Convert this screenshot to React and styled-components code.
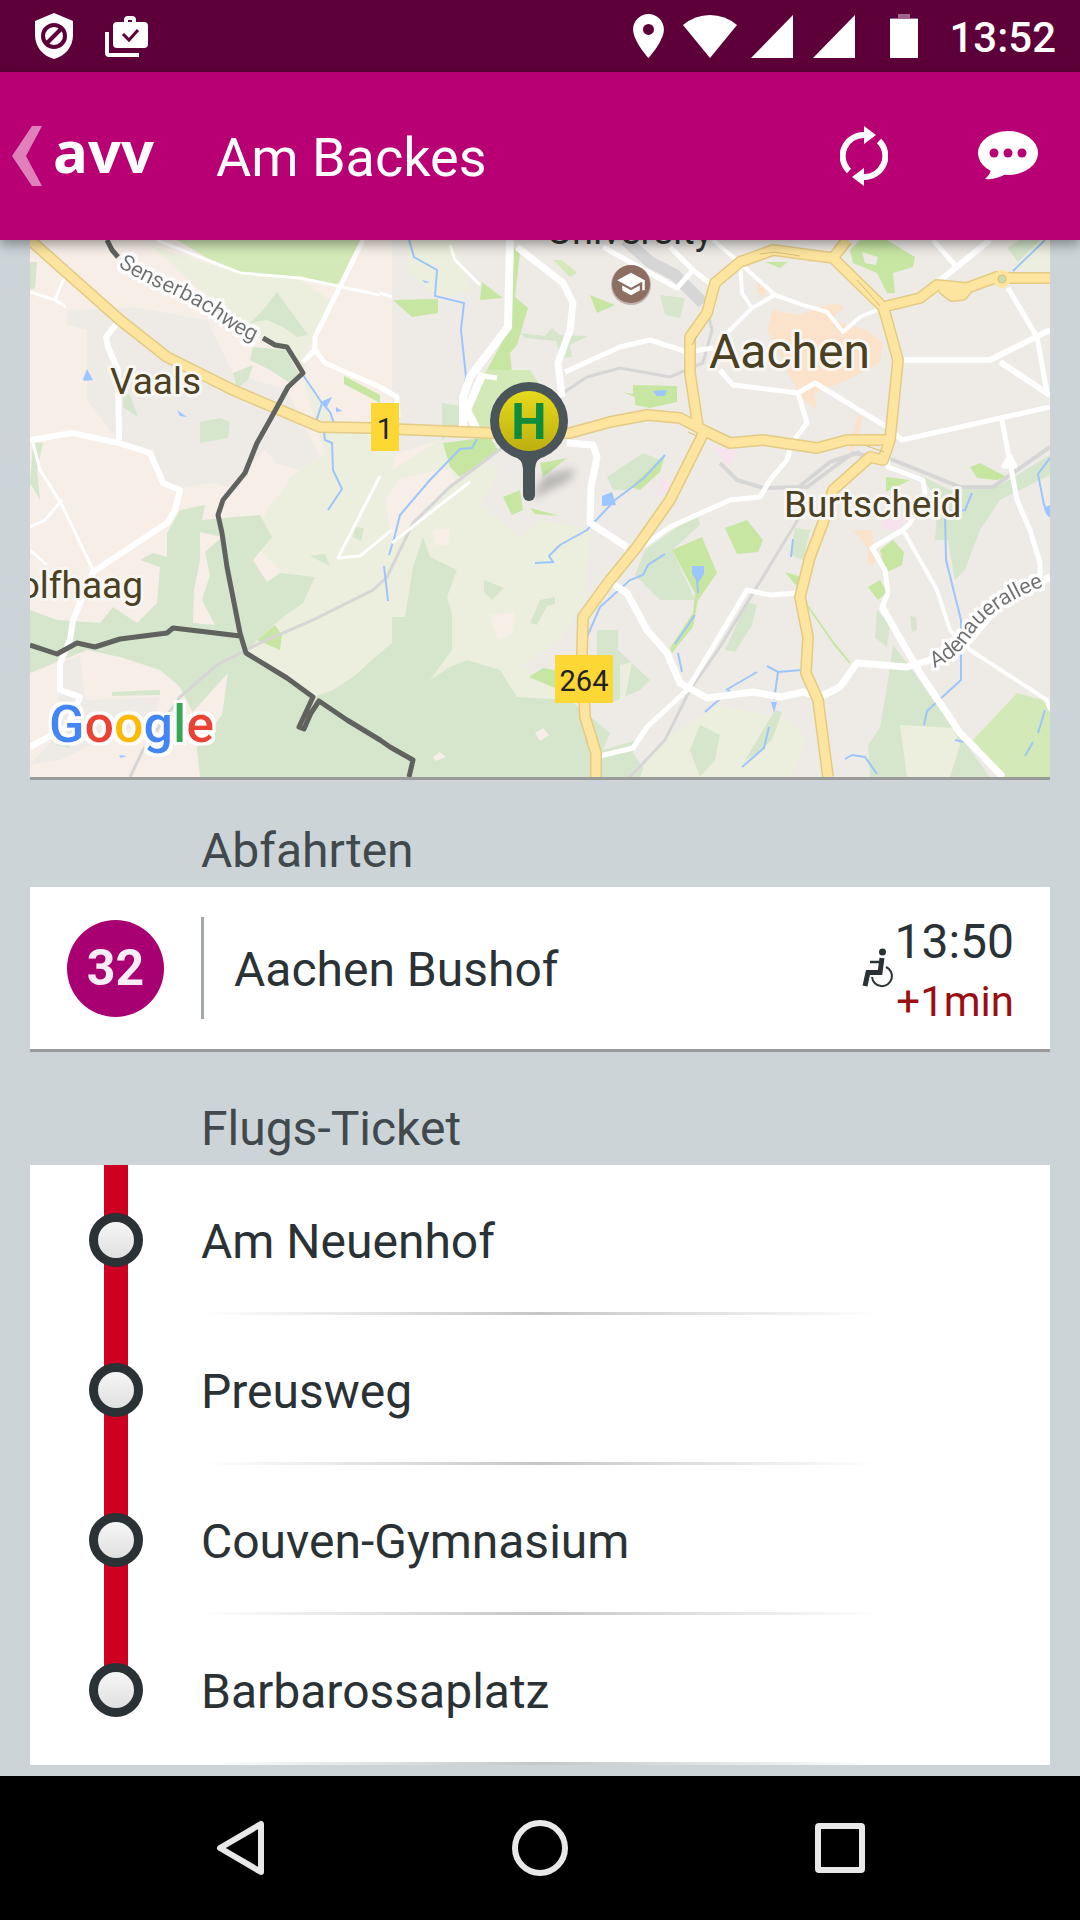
import React from 'react';
import styled, { createGlobalStyle } from 'styled-components';

const GlobalStyle = createGlobalStyle`
  * {
    box-sizing: border-box;
  }
  body {
    margin: 0;
    background: #ccd4d8;
    font-family: Roboto, 'Noto Sans', sans-serif;
  }
  h1, h2, p, ul {
    margin: 0;
    padding: 0;
    font-weight: 400;
  }
  button {
    border: 0;
    padding: 0;
    background: none;
    color: inherit;
    font: inherit;
  }
  svg {
    display: block;
  }
`;

const Screen = styled.div`
  display: flex;
  flex-direction: column;
  min-height: 100vh;
  background: #ccd4d8;
  color: #2a3235;
`;

const StatusBar = styled.div`
  display: flex;
  align-items: center;
  justify-content: space-between;
  height: 72px;
  padding: 0 24px 0 35px;
  background: #5d0039;
  color: #fff;
`;

const Notifications = styled.div`
  display: flex;
  align-items: center;
  gap: 32px;
`;

const Indicators = styled.div`
  display: flex;
  align-items: center;
`;

const Indicator = styled.span`
  display: flex;
  justify-content: center;
  width: ${props => (props.$wide ? 78 : 62)}px;
`;

const Clock = styled.time`
  padding: 4px 0 0 6px;
  font-size: 42px;
  font-weight: 500;
  line-height: 48px;
`;

const AppBar = styled.header`
  position: relative;
  z-index: 1;
  display: flex;
  align-items: center;
  height: 168px;
  padding-left: 12px;
  background: #b80074;
  color: #fff;
  box-shadow: 0 4px 12px rgba(0, 0, 0, 0.4);
`;

const BackButton = styled.button`
  display: flex;
  align-items: center;
  gap: 11px;
  width: 204px;
`;

const Logo = styled.span`
  padding-bottom: 10px;
  font-family: 'Open Sans', sans-serif;
  font-size: 58px;
  font-weight: 700;
  line-height: 80px;
`;

const Title = styled.h1`
  flex: 1;
  padding-top: 4px;
  font-size: 54px;
  line-height: 64px;
`;

const BarButton = styled.button`
  display: flex;
  align-items: center;
  justify-content: center;
  width: 144px;
  height: 144px;
`;

const Content = styled.main`
  flex: 1;
  padding: 0 30px 11px;
`;

const MapFrame = styled.section`
  border-bottom: 3px solid #999b9b;
`;

const MapDrawing = styled.svg`
  width: 100%;
  height: auto;
`;

const SectionTitle = styled.h2`
  padding: 41px 0 6px 171px;
  color: #41494d;
  font-size: 48px;
  line-height: 60px;
`;

const Departure = styled.section`
  display: flex;
  align-items: center;
  height: 165px;
  margin-bottom: 6px;
  padding-right: 36px;
  border-bottom: 3px solid #999b9b;
  background: #fff;
`;

const BadgeCell = styled.div`
  display: flex;
  justify-content: center;
  width: 171px;
`;

const LineBadge = styled.span`
  width: 97px;
  height: 97px;
  border-radius: 50%;
  background: #a80073;
  color: #f6eef4;
  font-size: 50px;
  font-weight: 700;
  line-height: 97px;
  text-align: center;
`;

const Destination = styled.p`
  flex: 1;
  padding: 4px 0 0 30px;
  border-left: 3px solid #a0a8aa;
  font-size: 48px;
  line-height: 98px;
`;

const Times = styled.div`
  padding-top: 8px;
  text-align: right;
`;

const Time = styled.p`
  font-size: 48px;
  line-height: 60px;
`;

const Delay = styled.p`
  color: #990f14;
  font-size: 42px;
  line-height: 60px;
`;

const StopList = styled.ul`
  background: #fff;
  list-style: none;
`;

const Stop = styled.li`
  display: flex;
  height: 150px;
`;

const Rail = styled.div`
  display: flex;
  align-items: center;
  justify-content: center;
  width: 171px;
  background: linear-gradient(#ce0021, #ce0021) top center / 24px ${props => (props.$last ? '50%' : '100%')} no-repeat;
`;

const StopDot = styled.span`
  width: 54px;
  height: 54px;
  border: 9px solid #2a3235;
  border-radius: 50%;
  background: linear-gradient(#f6f6f6, #e0e0e0);
`;

const StopName = styled.p`
  flex: 1;
  padding-top: 4px;
  font-size: 48px;
  line-height: 146px;
  background: linear-gradient(90deg, rgba(198, 198, 198, 0), #c6c6c6, rgba(198, 198, 198, 0)) bottom left / 80% 3px no-repeat;
`;

const NavBar = styled.nav`
  display: grid;
  grid-template-columns: repeat(3, 1fr);
  height: 144px;
  padding: 0 90px;
  background: #000;
`;

const NavButton = styled.button`
  display: flex;
  align-items: center;
  justify-content: center;
`;

const ShieldIcon = () => (
  <svg width="38" height="46" viewBox="0 0 38 46" aria-hidden="true">
    <path d="M19 0 38 8v14c0 12-8 21-19 24C8 43 0 34 0 22V8z" fill="#fff" />
    <circle cx="19" cy="23" r="11" fill="none" stroke="#5d0039" strokeWidth="4" />
    <path d="m12 30 14-14" stroke="#5d0039" strokeWidth="4" />
  </svg>
);

const JobsIcon = () => (
  <svg width="43" height="41" viewBox="0 0 43 41" aria-hidden="true">
    <path d="M2 16v21q0 2 2 2h30" fill="none" stroke="#fff" strokeWidth="4" />
    <path
      fillRule="evenodd"
      d="M12 6h7V4q0-4 4-4h4q4 0 4 4v2h8q4 0 4 4v18q0 4-4 4H12q-4 0-4-4V10q0-4 4-4zm11-2v2h4V4z"
      fill="#fff"
    />
    <path d="m18 18 6 6 9-10" fill="none" stroke="#5d0039" strokeWidth="3" />
  </svg>
);

const PlaceIcon = () => (
  <svg width="31" height="44" viewBox="5 2 14 20" aria-hidden="true">
    <path
      fill="#fff"
      d="M12 2C8.13 2 5 5.13 5 9c0 5.25 7 13 7 13s7-7.75 7-13c0-3.87-3.13-7-7-7zm0 9.5a2.5 2.5 0 1 1 0-5 2.5 2.5 0 0 1 0 5z"
    />
  </svg>
);

const WifiIcon = () => (
  <svg width="54" height="43" viewBox="0 0 54 43" aria-hidden="true">
    <path d="M27 43 0 10Q12 0 27 0t27 10z" fill="#fff" />
  </svg>
);

const SignalIcon = () => (
  <svg width="42" height="43" viewBox="0 0 42 43" aria-hidden="true">
    <path d="M42 0v43H0z" fill="#fff" />
  </svg>
);

const BatteryIcon = () => (
  <svg width="28" height="44" viewBox="0 0 28 44" aria-hidden="true">
    <path d="M8 0h12v4h8v2H0V4h8z" fill="#9e668a" />
    <path d="M0 5h28v39H0z" fill="#fff" />
  </svg>
);

const ChevronIcon = () => (
  <svg width="30" height="60" viewBox="0 0 30 60" aria-hidden="true">
    <path d="M20 0h10L14 30l16 30H20L0 30z" fill="#e080bb" />
  </svg>
);

const RefreshIcon = () => (
  <svg width="48" height="60" viewBox="0 0 48 60" aria-hidden="true">
    <path d="M9 45A21 21 0 0 1 25 9M39 15A21 21 0 0 1 23 51" fill="none" stroke="#fff" strokeWidth="6" />
    <path d="m24 0 12 9-12 9zM24 42l-12 9 12 9z" fill="#fff" />
  </svg>
);

const ChatIcon = () => (
  <svg width="60" height="50" viewBox="0 0 60 50" aria-hidden="true">
    <ellipse cx="30" cy="22" rx="30" ry="22" fill="#fff" />
    <path d="M13 37q0 6-6 11 12 1 22-6z" fill="#fff" />
    <g fill="#b80074">
      <circle cx="16" cy="22" r="4.5" />
      <circle cx="30" cy="22" r="4.5" />
      <circle cx="44" cy="22" r="4.5" />
    </g>
  </svg>
);

const WheelchairIcon = () => (
  <svg width="32" height="41" viewBox="0 0 32 41" role="img" aria-label="Rollstuhlgerecht">
    <g fill="none" stroke="#2a3235">
      <path d="M20 10 18 24.500H6L3 38" strokeWidth="5" />
      <path d="M8 14h10" strokeWidth="2.500" />
      <path d="M24 19a10 10 0 1 1-14 10" strokeWidth="2" />
    </g>
    <circle cx="20.500" cy="4" r="3.500" fill="#2a3235" />
  </svg>
);

// terrain patches, drawn in this order
const areas = [
  { color: '#eeebe7', points: '67,310 133,307 207,320 233,373 287,390 320,457 300,470 260,460 240,490 213,483 170,490 153,450 117,440 87,400 87,330 67,325' },
  { color: '#ecefdd', points: '150,245 227,270 300,280 330,300 308,350 303,373 263,338 200,290' },
  { color: '#ecefdd', points: '303,378 340,430 398,440 392,470 440,440 520,450 500,480 560,520 575,560 560,700 450,720 380,660 320,700 246,653 280,570 250,540 285,480 325,455' },
  { color: '#f7eee8', points: '245,470 265,450 290,480 275,500 258,510 235,500' },
  { color: '#eeebe7', points: '392,240 1050,240 1050,777 590,777 600,740 560,690 510,660 530,640 560,600 540,560 500,520 480,505 500,470 440,440 392,455' },
  { color: '#ecefdd', points: '404,240 455,240 470,290 440,300 410,275' },
  { color: '#ecefdd', points: '540,520 590,530 585,600 560,640 515,670 500,620 495,560' },
  { color: '#f7eee8', points: '433,530 450,528 448,545 435,545' },
  { color: '#f7eee8', points: '490,615 515,612 512,635 498,640' },
  { color: '#f7eee8', points: '400,478 450,468 455,480 415,520 392,540 385,500' },
  { color: '#d5e6cc', points: '167,557 167,533 180,510 205,505 202,520 260,515 272,537 253,560 267,582 280,573 315,577 303,603 283,617 257,640 247,650 313,697 333,690 353,677 380,653 392,643 392,617 405,617 413,567 423,537 430,557 457,570 447,597 452,613 452,650 430,680 450,667 467,660 500,670 517,697 570,700 610,733 603,750 637,740 633,753 650,777 200,777 193,713 180,687 160,670 120,657 87,650 30,673 30,610 57,620 100,623 113,607 137,623 157,603 160,567 140,560 153,553' },
  { color: '#f7eee8', points: '200,532 222,537 205,552 210,575 202,600 215,625 193,623 194,590 200,560' },
  { color: '#f7eee8', points: '228,673 222,715 195,750 200,773 175,753 190,715' },
  { color: '#f7eee8', points: '535,733 543,728 549,735 540,741' },
  { color: '#f7eee8', points: '433,757 440,752 446,757 436,761' },
  { color: '#eeebe7', points: '58,665 80,655 85,700 160,697 155,715 60,760 30,765 60,730' },
  { color: '#d5e6cc', points: '55,745 72,730 70,748' },
  { color: '#d5e6cc', points: '112,692 160,690 160,695 112,696' },
  { color: '#d3eab8', points: '177,240 227,270 240,275 300,278 340,285 363,240' },
  { color: '#d5e6cc', points: '277,292 308,335 297,337 283,327 267,320 250,323 263,310' },
  { color: '#d5e6cc', points: '253,347 285,350 300,375 290,383 270,370 250,360' },
  { color: '#d5e6cc', points: '200,422 220,418 230,422 228,438 200,443' },
  { color: '#d5e6cc', points: '233,373 253,365 248,380 237,388' },
  { color: '#d5e6cc', points: '123,393 130,395 138,417 123,407' },
  { color: '#d5e6cc', points: '30,262 37,262 35,288 30,290' },
  { color: '#d5e6cc', points: '33,443 43,443 37,470 40,500 30,483' },
  { color: '#c6e6a2', points: '344,376 380,395 380,403 344,384' },
  { color: '#c6e6a2', points: '257,640 275,625 282,635 280,650' },
  { color: '#d5e6cc', points: '310,556 325,554 330,566' },
  { color: '#d5e6cc', points: '355,527 364,528 361,541 353,537' },
  { color: '#d5e6cc', points: '484,580 504,588 492,600 484,592' },
  { color: '#d5e6cc', points: '540,600 555,597 555,604 547,606 537,625 530,623' },
  { color: '#c6e6a2', points: '513,247 520,253 515,297 528,308 517,345 510,353 512,373 487,370 507,333' },
  { color: '#d3eab8', points: '487,370 530,370 540,385 490,432 475,430 470,417 473,387' },
  { color: '#c6e6a2', points: '482,282 503,298 480,300' },
  { color: '#c6e6a2', points: '393,300 438,299 438,313 412,317' },
  { color: '#c6e6a2', points: '590,295 615,305 597,313' },
  { color: '#d3eab8', points: '553,260 562,260 577,273 570,277' },
  { color: '#d5e6cc', points: '520,333 545,336 552,328 560,335 588,336 570,345 572,357 562,358 556,341 525,338' },
  { color: '#d5e6cc', points: '660,295 685,298 680,318 665,315' },
  { color: '#c6e6a2', points: '622,392 633,394 633,385 677,386 677,402 650,408 635,405 635,397' },
  { color: '#d5e6cc', points: '607,477 643,453 660,460 627,490 613,490' },
  { color: '#c6e6a2', points: '665,455 660,472 640,490 630,487' },
  { color: '#f6e3ee', points: '661,477 677,487 657,497' },
  { color: '#f6e3ee', points: '714,447 738,450 728,467' },
  { color: '#c6e6a2', points: '540,463 567,458 543,477' },
  { color: '#c6e6a2', points: '443,443 490,437 498,450 460,477 450,467' },
  { color: '#d5e6cc', points: '442,403 467,407 462,425 442,440' },
  { color: '#c6e6a2', points: '503,497 520,490 523,510 512,515' },
  { color: '#c6e6a2', points: '530,508 560,516 535,514' },
  { color: '#c6e6a2', points: '850,250 860,240 887,240 915,257 913,267 893,273 895,293 887,293 877,273 853,263' },
  { color: '#eeebe7', points: '862,252 878,257 876,265 865,263' },
  { color: '#c6e6a2', points: '765,262 788,262 780,268' },
  { color: '#c6e6a2', points: '970,467 980,463 1007,477 997,480 977,478' },
  { color: '#c6e6a2', points: '886,477 910,480 886,492' },
  { color: '#ecefdd', points: '1010,240 1050,240 1050,272 1013,270' },
  { color: '#d5e6cc', points: '1007,248 1020,240 1040,240 1018,262' },
  { color: '#fbe2cb', points: '773,310 797,315 833,303 845,307 830,320 867,330 883,343 880,363 847,380 815,393 817,410 800,397 787,370 767,330' },
  { color: '#fbe2cb', points: '757,280 766,290 764,298 757,293' },
  { color: '#fbe2cb', points: '863,417 858,415 848,450 852,452' },
  { color: '#fbe2cb', points: '853,530 872,530 875,563 868,564 868,548' },
  { color: '#f6e3ee', points: '880,518 905,518 900,530 885,530' },
  { color: '#d5e6cc', points: '920,475 950,490 1000,485 1050,455 1050,475 1000,500 980,530 965,570 955,580 948,540 935,540 938,500' },
  { color: '#d5e6cc', points: '697,513 700,525 672,550 695,600 660,600 635,575 645,550' },
  { color: '#c6e6a2', points: '672,550 702,537 717,573 698,600 693,627 672,653 670,648 693,613 695,593' },
  { color: '#c6e6a2', points: '725,528 747,520 763,540 758,552 737,554' },
  { color: '#d5e6cc', points: '795,528 810,530 803,560 790,555' },
  { color: '#c6e6a2', points: '785,572 802,577 798,588' },
  { color: '#c6e6a2', points: '880,550 893,540 904,552 902,565 885,573' },
  { color: '#c6e6a2', points: '868,587 880,580 887,592 878,600' },
  { color: '#d5e6cc', points: '877,610 890,625 887,647 875,638' },
  { color: '#d5e6cc', points: '910,616 916,617 917,630 912,632' },
  { color: '#d5e6cc', points: '747,602 757,605 752,625 735,652 725,650' },
  { color: '#d5e6cc', points: '597,630 618,630 618,650 650,680 640,690 610,703 597,703' },
  { color: '#c6e6a2', points: '529,677 543,668 555,670 555,688' },
  { color: '#ecefdd', points: '620,665 632,662 625,698 620,700' },
  { color: '#ecefdd', points: '670,735 720,705 790,720 806,740 790,777 640,777 650,750' },
  { color: '#d5e6cc', points: '700,725 720,735 715,760 700,777 690,750' },
  { color: '#d5e6cc', points: '775,710 782,712 772,740 755,755 745,760' },
  { color: '#d5e6cc', points: '893,645 910,667 933,700 953,727 990,777 870,777 868,745 880,727 887,687' },
  { color: '#ecefdd', points: '900,725 953,728 960,745 950,777 907,777' },
  { color: '#d3eab8', points: '1017,693 1043,700 1050,713 1050,777 1005,777 973,740' },
];

const water = [
  'M409,240 414,257 437,270 435,296 464,303 461,330 466,377 461,403',
  'M477,439 472,448 460,449 430,480 400,515 395,535 389,555',
  'M384,566 388,601',
  'M303,375 322,403 330,412 334,423M322,403 316,422M324,432 325,440 332,443 333,470 342,489 328,510',
  'M665,455 645,477 635,485 615,500 587,530 560,545 549,556 553,562 535,563',
  'M665,554 648,565 643,575 630,580 600,607 587,637',
  'M697,580 698,593M695,615 675,644M678,653 682,672M730,690 705,712',
  'M1045,240 1013,271M1050,458 1038,474 1044,505 1050,515',
  'M972,493 965,510 945,512 946,560 961,620 961,680 927,711 924,725',
  'M793,539 791,557M726,690 757,672M767,666 778,672 802,670M778,672 774,700M769,727 764,748 742,767',
  'M845,759 852,755 865,757 877,774M955,740 965,742 983,760M1045,710 1038,733M1033,742 1025,756',
];

const ponds = [
  '83,379 87,369 93,380 84,381',
  '177,410 187,417 180,416',
  '320,402 332,397 327,407',
  '336,407 342,411 336,412',
  '422,280 430,282 425,283',
  '653,391 667,390 665,396 657,396',
  '602,496 612,492 616,505 602,506',
  '692,566 704,566 704,574 698,583 692,574',
  '771,702 777,702 774,713',
  '1044,508 1050,505 1050,518 1046,514',
  '119,755 127,756 121,758',
];

const rails = [
  { width: 12, d: 'M625,240 650,262 675,275 703,303' },
  { width: 3, d: 'M557,397 587,377 620,368 670,377 703,363 712,330 709,318' },
  { width: 4, d: 'M720,463 737,480 763,488 807,487 853,453 893,460 960,487 993,487 1050,447' },
  { width: 4, d: 'M800,486 830,462 860,452' },
  { width: 3, d: 'M810,500 720,647 690,690 665,740 630,777' },
  { width: 3, d: 'M130,777 143,750 180,697 217,665 260,643 313,620 373,590 387,577 413,523 450,487 503,447' },
];

const streets = [
  { width: 3, d: 'M157,240 240,273 300,278 380,295M380,293 392,297M450,245 455,260 480,285' },
  { width: 3, d: 'M30,292 55,300 66,307M55,300 64,278M33,443 40,470 62,505 93,570M62,500 45,520 30,527M30,550 47,565' },
  { width: 3, d: 'M392,543 440,505 470,482M380,476 338,558 360,556 392,530' },
  { width: 5, d: 'M363,240 315,337 315,350 325,363 380,387 397,397 398,417M315,350 303,362' },
  { width: 6, d: 'M118,322 106,337 108,347 118,370 119,440' },
  { width: 6, d: 'M30,440 72,433 119,443 150,453 163,483 180,490 175,510 167,523 93,572 73,620 70,640 60,663 60,690 80,697 67,727 30,747' },
  { width: 8, d: 'M510,240 508,327 470,377 463,397 463,427M483,373 467,410 477,430' },
  { width: 7, d: 'M517,247 563,283 573,303 570,330 558,363 562,397' },
  { width: 5, d: 'M565,372 620,347 650,340 687,352 713,348M483,376 497,378' },
  { width: 7, d: 'M567,443 593,445 597,457 591,487 590,523 627,547' },
  { width: 5, d: 'M637,550 670,527 730,500 760,497 770,480 787,460 792,443 807,423 798,393 733,385 720,370' },
  { width: 5, d: 'M798,393 815,383 887,427 902,440 1050,407' },
  { width: 4, d: 'M713,240 740,263 775,295 803,305 827,312 843,332 860,317 877,310M740,263 742,293 752,308 775,295M752,308 727,333' },
  { width: 5, d: 'M933,240 955,265M603,247 677,288 693,270 712,285M670,247 693,270' },
  { width: 6, d: 'M990,240 938,282M900,360 990,360 1050,330M1000,362 1050,395' },
  { width: 5, d: 'M1008,288 1037,337 1047,393M1002,420 1010,463 1017,500 1030,530 1040,563 1040,580M1004,466 1010,456 1015,466z' },
  { width: 5, d: 'M887,450 888,467 923,480 925,493 910,523 903,530 872,548 885,570 888,593 882,607 920,673' },
  { width: 7, d: 'M882,607 920,673 960,733 1003,777' },
  { width: 4, d: 'M903,530 937,590 950,630 970,650 1047,700 1050,710' },
  { width: 7, d: 'M610,582 627,593 647,630 667,653 680,683 707,698 753,692 780,697 803,692 820,697 840,687 857,663 907,667 930,660 970,640 1003,600 1050,577' },
  { width: 5, d: 'M600,756 633,748 647,727 687,690 747,590 770,595 798,593' },
];

const highways = [
  'M30,240 120,320 167,357 233,390 320,427 370,428 490,433 570,433 610,422 647,415 680,418 703,430 730,443 763,440 817,448 847,440 887,440',
  'M698,427 690,373 690,337 707,313 715,283 740,262 773,250 833,258 883,307 887,320 898,360 890,440 883,460 870,457 833,490 823,523 810,557 800,597 808,637 806,673 818,700 828,777',
  'M847,240 833,258M883,307 920,298 937,285 967,288 997,277 1007,278 1050,278M942,288 952,296 962,295 968,288',
  'M703,434 670,500 637,547 610,580 583,617 582,653 585,717 596,753 596,777',
];

const borders = [
  'M107,240 112,250 118,257M263,338 275,345 287,347 297,363 303,373 288,387 270,420 257,443 245,473 223,500 218,515 222,533 227,567 240,633 246,653 287,678 313,697 299,727 304,729 311,713 319,701 347,720 380,740 390,747 413,760 409,777',
  'M30,645 57,654 77,643 95,647 120,639 167,633 173,628 207,632 240,636',
];

const TownLabel = styled.text`
  fill: #4b4021;
  stroke: #f8f6f2;
  stroke-width: 6px;
  paint-order: stroke;
  stroke-linejoin: round;
  font-size: ${props => props.$size || 37}px;
`;

const StreetLabel = styled.text`
  fill: #6e6f70;
  font-size: 22px;
`;

const StationMap = () => (
  <MapDrawing viewBox="30 240 1020 537" role="img" aria-label="Karte der Haltestelle Am Backes">
    <defs>
      <filter id="halo" x="-10%" y="-30%" width="120%" height="160%">
        <feMorphology in="SourceAlpha" operator="dilate" radius="3" result="thick" />
        <feFlood floodColor="#fff" floodOpacity="0.9" />
        <feComposite in2="thick" operator="in" />
        <feMerge>
          <feMergeNode />
          <feMergeNode in="SourceGraphic" />
        </feMerge>
      </filter>
      <filter id="soft" x="-50%" y="-50%" width="200%" height="200%">
        <feGaussianBlur stdDeviation="4" />
      </filter>
      <linearGradient id="sign" x1="0" y1="0" x2="0" y2="1">
        <stop offset="0" stopColor="#e6da1c" />
        <stop offset="1" stopColor="#bdb010" />
      </linearGradient>
      <path id="senserbachweg" d="M118,266 Q130,275 160,289 Q200,306 222,323 Q240,338 280,352" />
      <path id="adenauerallee" d="M934,668 Q958,658 972,636 Q990,606 1050,584" />
    </defs>

    <rect x="30" y="240" width="1020" height="537" fill="#f7eee8" />
    {areas.map(area => <polygon key={area.points} points={area.points} fill={area.color} />)}
    <path d="M807,605 835,645 850,663" fill="none" stroke="#c6e6a2" strokeWidth="2" />

    <g fill="none" stroke="#d6d6d6">
      {rails.map(rail => <path key={rail.d} d={rail.d} strokeWidth={rail.width} />)}
    </g>
    <g fill="none" stroke="#9cc6fb" strokeWidth="2">
      {water.map(d => <path key={d} d={d} />)}
    </g>
    {ponds.map(points => <polygon key={points} points={points} fill="#9cc6ff" />)}
    <g fill="none" stroke="#fff" strokeLinejoin="round">
      {streets.map(street => <path key={street.d} d={street.d} strokeWidth={street.width} />)}
    </g>
    <g fill="none" stroke="#e3cb84" strokeWidth="12" strokeLinejoin="round">
      {highways.map(d => <path key={d} d={d} />)}
    </g>
    <g fill="none" stroke="#fde59f" strokeWidth="9" strokeLinejoin="round">
      {highways.map(d => <path key={d} d={d} />)}
    </g>
    <g fill="none" stroke="#d9bd72" strokeWidth="1">
      <path d="M760,254 775,252 800,256M857,280 880,306M692,345 697,336M867,446 884,452M688,432 697,436" />
    </g>
    <circle cx="1002" cy="279" r="9" fill="#fde59f" />
    <circle cx="1002" cy="279" r="4" fill="#c9dfb0" stroke="#d9bd72" />
    <g fill="none" stroke="#5f625e" strokeWidth="5" strokeLinejoin="round">
      {borders.map(d => <path key={d} d={d} />)}
    </g>

    <rect x="371" y="403" width="28" height="48" fill="#fdd835" />
    <text x="385" y="439" textAnchor="middle" fontSize="29" fill="#222">1</text>
    <rect x="555" y="655" width="58" height="48" fill="#fdd835" />
    <text x="584" y="691" textAnchor="middle" fontSize="29" fill="#222">264</text>

    <circle cx="631" cy="285" r="20" fill="#77605a" opacity="0.4" />
    <circle cx="631" cy="284" r="19" fill="#8d6e63" />
    <path
      transform="translate(616 269) scale(1.25)"
      d="M5 13.180v4L12 21l7-3.820v-4L12 17l-7-3.820zM12 3 1 9l11 6 9-4.910V17h2V9z"
      fill="#fff"
    />

    <text x="630" y="244" textAnchor="middle" fontSize="38" fill="#333">University</text>
    <TownLabel x="110" y="394">Vaals</TownLabel>
    <TownLabel x="709" y="368" $size={48}>Aachen</TownLabel>
    <TownLabel x="784" y="517">Burtscheid</TownLabel>
    <TownLabel x="143" y="598" textAnchor="end">Wolfhaag</TownLabel>
    <StreetLabel filter="url(#halo)">
      <textPath href="#senserbachweg">Senserbachweg</textPath>
    </StreetLabel>
    <StreetLabel filter="url(#halo)">
      <textPath href="#adenauerallee">Adenauerallee</textPath>
    </StreetLabel>

    <path d="M530,500 545,475 575,468 570,480z" fill="#555" opacity="0.35" filter="url(#soft)" />
    <path d="M529,450v45" stroke="#4a555a" strokeWidth="12" strokeLinecap="round" />
    <path d="M512,455q11 4 11 14h12q0-10 11-14z" fill="#4a555a" />
    <circle cx="529" cy="421" r="39" fill="#4a555a" />
    <circle cx="529" cy="421" r="30" fill="url(#sign)" />
    <text x="529" y="439" textAnchor="middle" fontSize="50" fontWeight="700" fill="#0c8c3c">H</text>

    <text x="49" y="742" fontSize="52" fontWeight="500" filter="url(#halo)">
      <tspan fill="#4285f4">G</tspan>
      <tspan fill="#ea4335">o</tspan>
      <tspan fill="#fbbc05">o</tspan>
      <tspan fill="#4285f4">g</tspan>
      <tspan fill="#34a853">l</tspan>
      <tspan fill="#ea4335">e</tspan>
    </text>
  </MapDrawing>
);

const stops = ['Am Neuenhof', 'Preusweg', 'Couven-Gymnasium', 'Barbarossaplatz'];

const App = () => (
  <Screen>
    <GlobalStyle />
    <StatusBar>
      <Notifications>
        <ShieldIcon />
        <JobsIcon />
      </Notifications>
      <Indicators>
        <Indicator><PlaceIcon /></Indicator>
        <Indicator><WifiIcon /></Indicator>
        <Indicator><SignalIcon /></Indicator>
        <Indicator><SignalIcon /></Indicator>
        <Indicator $wide><BatteryIcon /></Indicator>
        <Clock>13:52</Clock>
      </Indicators>
    </StatusBar>

    <AppBar>
      <BackButton type="button" aria-label="avv, zurück">
        <ChevronIcon />
        <Logo>avv</Logo>
      </BackButton>
      <Title>Am Backes</Title>
      <BarButton type="button" aria-label="Aktualisieren"><RefreshIcon /></BarButton>
      <BarButton type="button" aria-label="Nachricht"><ChatIcon /></BarButton>
    </AppBar>

    <Content>
      <MapFrame>
        <StationMap />
      </MapFrame>

      <SectionTitle>Abfahrten</SectionTitle>
      <Departure>
        <BadgeCell>
          <LineBadge>32</LineBadge>
        </BadgeCell>
        <Destination>Aachen Bushof</Destination>
        <WheelchairIcon />
        <Times>
          <Time>13:50</Time>
          <Delay>+1min</Delay>
        </Times>
      </Departure>

      <SectionTitle>Flugs-Ticket</SectionTitle>
      <StopList>
        {stops.map((stop, index) => (
          <Stop key={stop}>
            <Rail $last={index === stops.length - 1}>
              <StopDot />
            </Rail>
            <StopName>{stop}</StopName>
          </Stop>
        ))}
      </StopList>
    </Content>

    <NavBar>
      <NavButton type="button" aria-label="Zurück">
        <svg width="48" height="56" viewBox="0 0 48 56">
          <path d="M45 4v48L4 28z" fill="none" stroke="#e8e8e8" strokeWidth="6" strokeLinejoin="round" />
        </svg>
      </NavButton>
      <NavButton type="button" aria-label="Startseite">
        <svg width="56" height="56" viewBox="0 0 56 56">
          <circle cx="28" cy="28" r="25" fill="none" stroke="#e8e8e8" strokeWidth="6" />
        </svg>
      </NavButton>
      <NavButton type="button" aria-label="Übersicht">
        <svg width="50" height="50" viewBox="0 0 50 50">
          <rect x="3" y="3" width="44" height="44" rx="1" fill="none" stroke="#e8e8e8" strokeWidth="6" strokeLinejoin="round" />
        </svg>
      </NavButton>
    </NavBar>
  </Screen>
);

export default App;
